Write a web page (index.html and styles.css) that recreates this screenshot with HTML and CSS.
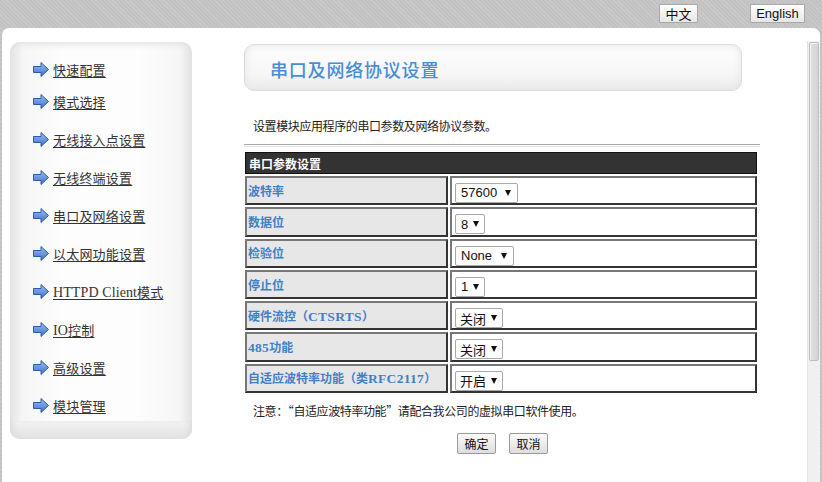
FILE: index.html
```html
<!DOCTYPE html>
<html lang="zh-CN">
<head>
<meta charset="utf-8">
<title>串口及网络协议设置</title>
<link rel="stylesheet" href="styles.css">
</head>
<body>
<div class="topbar">
  <button class="lang lang-cn">中文</button>
  <button class="lang lang-en">English</button>
</div>
<div class="panel">
  <div class="sidebar">
    <ul class="menu">
      <li class="first"><svg class="arr" viewBox="0 0 16 15" width="16" height="15"><defs><linearGradient id="g" x1="0" y1="0" x2="0" y2="1"><stop offset="0" stop-color="#9cc0f0"/><stop offset="1" stop-color="#3c70c6"/></linearGradient></defs><polygon points="0.5,4.5 8,4.5 8,0.5 15.5,7.5 8,14.5 8,10.5 0.5,10.5" fill="url(#g)" stroke="#2d5cab" stroke-width="1"/></svg><a href="#">快速配置</a></li>
      <li><svg class="arr" viewBox="0 0 16 15" width="16" height="15"><polygon points="0.5,4.5 8,4.5 8,0.5 15.5,7.5 8,14.5 8,10.5 0.5,10.5" fill="url(#g)" stroke="#2d5cab" stroke-width="1"/></svg><a href="#">模式选择</a></li>
      <li><svg class="arr" viewBox="0 0 16 15" width="16" height="15"><polygon points="0.5,4.5 8,4.5 8,0.5 15.5,7.5 8,14.5 8,10.5 0.5,10.5" fill="url(#g)" stroke="#2d5cab" stroke-width="1"/></svg><a href="#">无线接入点设置</a></li>
      <li><svg class="arr" viewBox="0 0 16 15" width="16" height="15"><polygon points="0.5,4.5 8,4.5 8,0.5 15.5,7.5 8,14.5 8,10.5 0.5,10.5" fill="url(#g)" stroke="#2d5cab" stroke-width="1"/></svg><a href="#">无线终端设置</a></li>
      <li><svg class="arr" viewBox="0 0 16 15" width="16" height="15"><polygon points="0.5,4.5 8,4.5 8,0.5 15.5,7.5 8,14.5 8,10.5 0.5,10.5" fill="url(#g)" stroke="#2d5cab" stroke-width="1"/></svg><a href="#">串口及网络设置</a></li>
      <li><svg class="arr" viewBox="0 0 16 15" width="16" height="15"><polygon points="0.5,4.5 8,4.5 8,0.5 15.5,7.5 8,14.5 8,10.5 0.5,10.5" fill="url(#g)" stroke="#2d5cab" stroke-width="1"/></svg><a href="#">以太网功能设置</a></li>
      <li><svg class="arr" viewBox="0 0 16 15" width="16" height="15"><polygon points="0.5,4.5 8,4.5 8,0.5 15.5,7.5 8,14.5 8,10.5 0.5,10.5" fill="url(#g)" stroke="#2d5cab" stroke-width="1"/></svg><a href="#"><span class="lat">HTTPD Client</span>模式</a></li>
      <li><svg class="arr" viewBox="0 0 16 15" width="16" height="15"><polygon points="0.5,4.5 8,4.5 8,0.5 15.5,7.5 8,14.5 8,10.5 0.5,10.5" fill="url(#g)" stroke="#2d5cab" stroke-width="1"/></svg><a href="#"><span class="lat">IO</span>控制</a></li>
      <li><svg class="arr" viewBox="0 0 16 15" width="16" height="15"><polygon points="0.5,4.5 8,4.5 8,0.5 15.5,7.5 8,14.5 8,10.5 0.5,10.5" fill="url(#g)" stroke="#2d5cab" stroke-width="1"/></svg><a href="#">高级设置</a></li>
      <li><svg class="arr" viewBox="0 0 16 15" width="16" height="15"><polygon points="0.5,4.5 8,4.5 8,0.5 15.5,7.5 8,14.5 8,10.5 0.5,10.5" fill="url(#g)" stroke="#2d5cab" stroke-width="1"/></svg><a href="#">模块管理</a></li>
    </ul>
    <div class="sidebar-foot"></div>
  </div>
  <div class="main">
    <div class="titlebox"><h1>串口及网络协议设置</h1></div>
    <p class="desc">设置模块应用程序的串口参数及网络协议参数。</p>
    <div class="rule"></div>
    <table class="settings">
      <tr><th colspan="2">串口参数设置</th></tr>
      <tr><td class="lbl">波特率</td><td class="val"><span class="sel w57600">57600<span class="tri"></span></span></td></tr>
      <tr><td class="lbl">数据位</td><td class="val"><span class="sel w8">8<span class="tri"></span></span></td></tr>
      <tr><td class="lbl">检验位</td><td class="val"><span class="sel wnone">None<span class="tri"></span></span></td></tr>
      <tr><td class="lbl">停止位</td><td class="val"><span class="sel w8">1<span class="tri"></span></span></td></tr>
      <tr><td class="lbl">硬件流控（<span class="lat">CTSRTS</span>）</td><td class="val"><span class="sel wcn">关闭<span class="tri"></span></span></td></tr>
      <tr><td class="lbl"><span class="lat">485</span>功能</td><td class="val"><span class="sel wcn">关闭<span class="tri"></span></span></td></tr>
      <tr><td class="lbl">自适应波特率功能（类<span class="lat">RFC2117</span>）</td><td class="val"><span class="sel wcn">开启<span class="tri"></span></span></td></tr>
    </table>
    <p class="note">注意：“自适应波特率功能”请配合我公司的虚拟串口软件使用。</p>
    <div class="actions">
      <button class="btn">确定</button>
      <button class="btn">取消</button>
    </div>
  </div>
  <div class="scrollbar"><div class="thumb"></div></div>
</div>
</body>
</html>
```
FILE: styles.css
```css
html, body {
  margin: 0;
  padding: 0;
  height: 100%;
  overflow: hidden;
}
body {
  background: repeating-linear-gradient(45deg, #cacaca 0, #cacaca 1px, #c2c2c2 1px, #c2c2c2 3px);
  font-family: "Noto Sans CJK SC", sans-serif;
  color: #333;
}
.topbar {
  height: 28px;
  display: flex;
  align-items: flex-start;
  padding-top: 4px;
  box-sizing: border-box;
}
.lang {
  height: 19px;
  border: 1px solid #a8a8a8;
  background: linear-gradient(#ffffff, #e6e6e6);
  font-size: 13px;
  line-height: 16px;
  padding: 0;
  color: #111;
  border-radius: 1px;
}
.lang-cn {
  margin-left: 659px;
  width: 39px;
  font-family: "Noto Sans CJK SC", sans-serif;
  font-size: 13px;
}
.lang-en {
  margin-left: 52px;
  width: 55px;
  font-family: "Liberation Sans", Arial, sans-serif;
}
.panel {
  margin: 0 2px;
  height: calc(100% - 28px);
  background: #fff;
  border-radius: 7px 7px 0 0;
  display: flex;
  align-items: flex-start;
}
.sidebar {
  margin-left: 8px;
  margin-top: 14px;
  width: 182px;
  border-radius: 10px;
  background: linear-gradient(to right, #e2e2e2 0, #f6f6f6 7%, #fdfdfd 30%, #fdfdfd 70%, #f6f6f6 93%, #e2e2e2 100%);
  box-shadow: inset 0 6px 6px -4px #e0e0e0;
  display: flex;
  flex-direction: column;
}
.menu {
  list-style: none;
  margin: 0;
  padding: 17px 0 0 23px;
}
.menu li {
  height: 20px;
  display: flex;
  align-items: center;
  margin-bottom: 18px;
  font-family: "Liberation Serif", "Noto Sans CJK SC", serif;
  font-size: 13px;
}
.menu li.first {
  margin-bottom: 12px;
}
.menu li:last-child {
  margin-bottom: 6px;
}
.menu .arr {
  flex: none;
  margin-right: 4px;
}
.menu a {
  color: #333;
  text-decoration: underline;
  text-underline-offset: 2px;
  letter-spacing: 0.2px;
  white-space: nowrap;
}
.menu .lat {
  font-size: 14px;
  letter-spacing: 0.1px;
}
.sidebar-foot {
  height: 18px;
  border-radius: 0 0 10px 10px;
  background: linear-gradient(#f2f2f2, #e2e2e2);
  box-shadow: inset 6px 0 6px -4px #d8d8d8, inset -6px 0 6px -4px #d8d8d8;
}
.main {
  margin-left: 51px;
  margin-top: 16px;
  width: 517px;
  display: flex;
  flex-direction: column;
}
.titlebox {
  margin-left: 1px;
  width: 496px;
  height: 45px;
  border: 1px solid #dcdcdc;
  border-radius: 10px;
  background: linear-gradient(to bottom, #fdfdfd 0, #f7f7f7 60%, #ececec 100%);
  box-shadow: inset 0 0 8px #e4e4e4;
  display: flex;
  align-items: center;
}
.titlebox h1 {
  margin: 2px 0 0 25px;
  font-size: 18px;
  font-weight: 500;
  letter-spacing: 0.8px;
  color: #4b8dd4;
}
.desc {
  margin: 27px 0 0 10px;
  font-size: 12px;
  line-height: 16px;
  letter-spacing: -0.4px;
  color: #222;
}
.rule {
  margin: 10px 0 0 1px;
  height: 1px;
  border-top: 1px solid #aaa;
  border-bottom: 1px solid #e0e0e0;
}
.settings {
  margin-top: 3px;
  width: 516px;
  border-collapse: separate;
  border-spacing: 2px;
}
.settings th {
  height: 20px;
  padding: 0 0 0 3px;
  background: #333;
  border: 1px solid #111;
  color: #fff;
  text-align: left;
  font-size: 12px;
  font-weight: bold;
  font-family: "Noto Sans CJK SC", sans-serif;
}
.settings td {
  height: 25.3px;
  padding: 0;
  border: 2px solid;
  border-color: #777 #333 #333 #777;
}
.settings td.lbl {
  width: 198px;
  background: #e7e7e7;
  padding-left: 1px;
  color: #3f80c8;
  font-weight: bold;
  font-size: 12px;
  font-family: "Liberation Serif", "Noto Sans CJK SC", serif;
  white-space: nowrap;
}
.settings td.lbl .lat {
  font-size: 13.5px;
  letter-spacing: 0.3px;
}
.settings td.val {
  background: #fff;
  padding-left: 3px;
}
.sel {
  display: inline-flex;
  align-items: center;
  justify-content: space-between;
  box-sizing: border-box;
  height: 20px;
  padding: 0 6px 0 5px;
  border: 1px solid #a9a9a9;
  border-radius: 2px;
  background: #fff;
  font-family: "Liberation Sans", "Noto Sans CJK SC", sans-serif;
  font-size: 13px;
  color: #111;
  vertical-align: middle;
  white-space: nowrap;
}
.tri {
  flex: none;
  width: 0;
  height: 0;
  margin-left: 5px;
  border-left: 3.5px solid transparent;
  border-right: 3.5px solid transparent;
  border-top: 6px solid #111;
}
.w57600 { width: 63px; }
.w8 { width: 30px; }
.wnone { width: 59px; }
.wcn { width: 48px; padding: 0 6px 0 4px; }
.note {
  margin: 8px 0 0 10px;
  font-size: 12px;
  line-height: 16px;
  letter-spacing: -0.4px;
  color: #222;
}
.actions {
  margin-top: 14px;
  display: flex;
  justify-content: center;
  gap: 13px;
  padding-left: 2px;
}
.btn {
  width: 39px;
  height: 21px;
  padding: 0;
  border: 1px solid #9a9a9a;
  border-radius: 2px;
  background: linear-gradient(#fafafa, #dedede);
  font-family: "Noto Sans CJK SC", sans-serif;
  font-size: 12px;
  color: #111;
}
.scrollbar {
  margin-left: auto;
  margin-top: 13px;
  width: 13px;
  height: calc(100% - 13px);
  background: #f0f0f0;
  border-left: 1px solid #e2e2e2;
  box-sizing: border-box;
  padding: 1px 1px 0 1px;
}
.thumb {
  height: 317px;
  border: 1px solid #bdbdbd;
  border-radius: 2px;
  background: linear-gradient(to right, #e0e0e0, #d4d4d4);
  box-shadow: inset 1px 1px 0 #f4f4f4;
}
```
